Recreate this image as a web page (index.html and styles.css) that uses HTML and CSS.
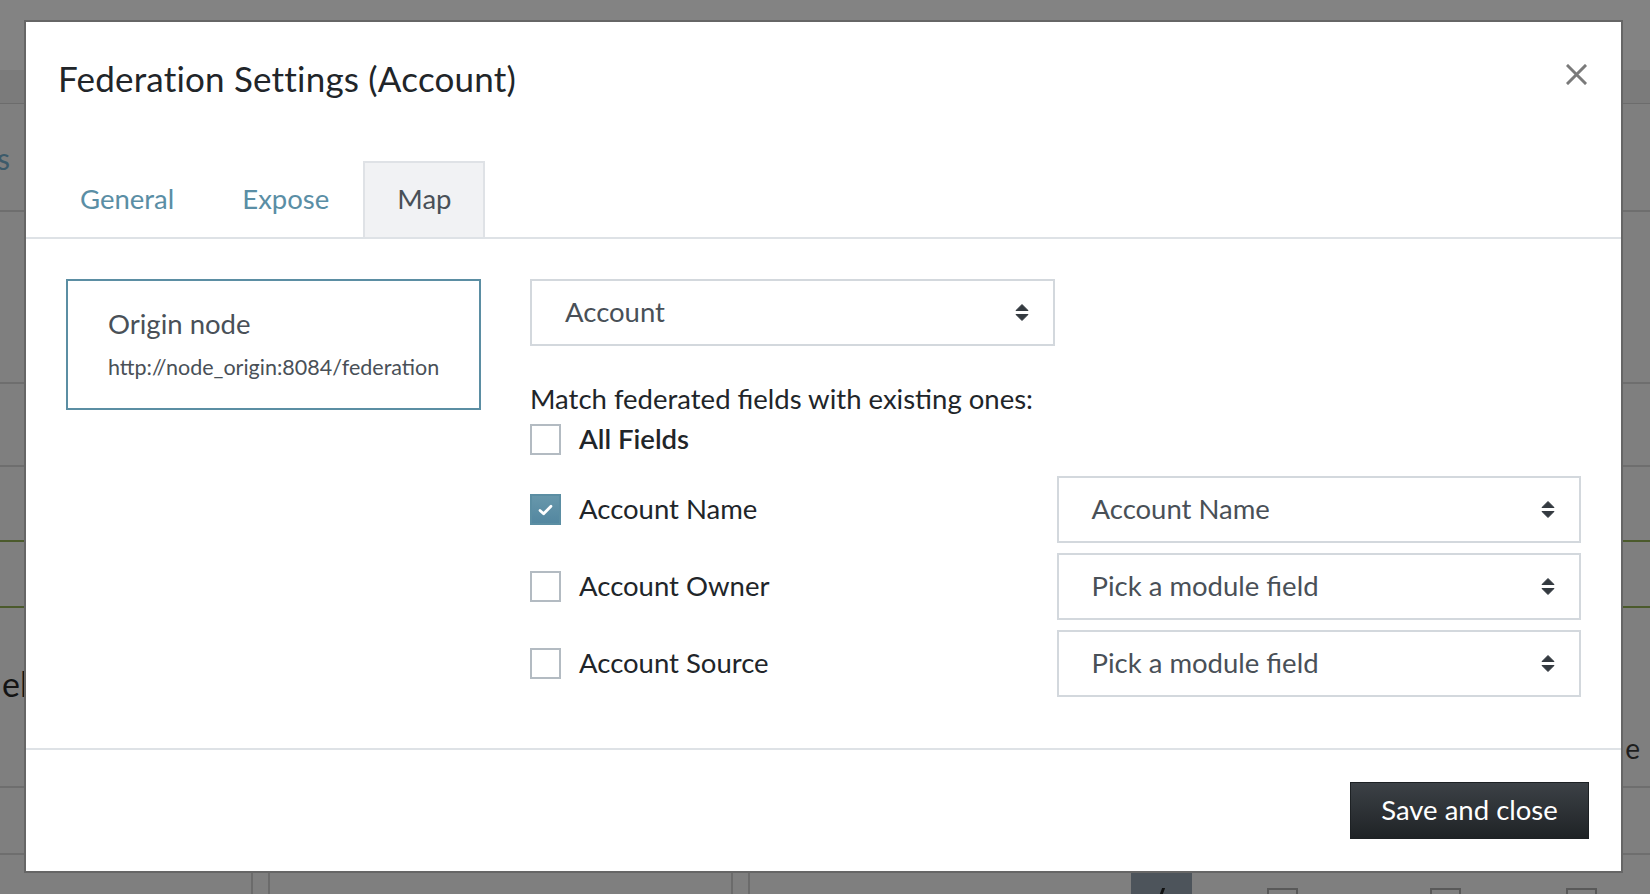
FILE: index.html
```html
<!DOCTYPE html>
<html lang="en">
<head>
<meta charset="utf-8">
<title>Federation Settings (Account)</title>
<link rel="stylesheet" href="styles.css">
</head>
<body>
<div class="page">
  <div class="bg-band bg-top"></div>
  <div class="bg-band bg-head"></div>
  <div class="bg-row h108"><span class="bg-link">s</span></div>
  <div class="bg-row h172"></div>
  <div class="bg-row h83"></div>
  <div class="bg-row h75 green"></div>
  <div class="bg-row h66 green"></div>
  <div class="bg-row h180 bg-split"><span class="bg-strong">el</span><span class="bg-e">e</span></div>
  <div class="bg-row h67"></div>
  <div class="bg-row h16 noline"></div>
  <div class="bg-bottom">
    <div class="cell w253"></div>
    <div class="cell w17"></div>
    <div class="cell w463"></div>
    <div class="cell w17"></div>
    <div class="cell w381"></div>
    <div class="cell dark"><span class="slash"></span></div>
    <div class="cell w75"></div>
    <div class="sq"></div>
    <div class="cell w132"></div>
    <div class="sq"></div>
    <div class="cell w105"></div>
    <div class="sq"></div>
  </div>
</div>

<div class="modal" role="dialog">
  <div class="modal-header">
    <h1 class="modal-title">Federation Settings (Account)</h1>
    <button class="close" aria-label="Close">
      <svg width="21" height="21" viewBox="0 0 21 21"><path d="M2 2 L19 19 M19 2 L2 19" stroke="#7a7a7a" stroke-width="3" stroke-linecap="square" fill="none"/></svg>
    </button>
  </div>

  <nav class="tabs">
    <a class="tab">General</a>
    <a class="tab">Expose</a>
    <a class="tab active">Map</a>
  </nav>

  <div class="modal-body">
    <div class="node-card">
      <div class="node-name">Origin node</div>
      <div class="node-url">http://node_origin:8084/federation</div>
    </div>

    <div class="mapping">
      <div class="grid">
        <div class="select"><span>Account</span><svg class="arrows" width="14" height="19" viewBox="0 0 14 19"><path d="M1 7.5 L7 1.5 L13 7.5 Z M1 11.5 L7 17.5 L13 11.5 Z" fill="#343a40" stroke="#343a40" stroke-width="1" stroke-linejoin="round"/></svg></div>
      </div>

      <div class="match-label">Match federated fields with existing ones:</div>

      <label class="check all">
        <span class="box"></span><span class="check-text">All Fields</span>
      </label>

      <div class="rows">
        <div class="grid row">
          <label class="check"><span class="box checked"><svg width="15" height="12" viewBox="0 0 15 12"><path d="M2 6.5 L5.6 9.8 L13 2.2" stroke="#fff" stroke-width="2.8" fill="none" stroke-linecap="round" stroke-linejoin="round"/></svg></span><span class="check-text">Account Name</span></label>
          <div class="select"><span>Account Name</span><svg class="arrows" width="14" height="19" viewBox="0 0 14 19"><path d="M1 7.5 L7 1.5 L13 7.5 Z M1 11.5 L7 17.5 L13 11.5 Z" fill="#343a40" stroke="#343a40" stroke-width="1" stroke-linejoin="round"/></svg></div>
        </div>
        <div class="grid row">
          <label class="check"><span class="box"></span><span class="check-text">Account Owner</span></label>
          <div class="select"><span>Pick a module field</span><svg class="arrows" width="14" height="19" viewBox="0 0 14 19"><path d="M1 7.5 L7 1.5 L13 7.5 Z M1 11.5 L7 17.5 L13 11.5 Z" fill="#343a40" stroke="#343a40" stroke-width="1" stroke-linejoin="round"/></svg></div>
        </div>
        <div class="grid row">
          <label class="check"><span class="box"></span><span class="check-text">Account Source</span></label>
          <div class="select"><span>Pick a module field</span><svg class="arrows" width="14" height="19" viewBox="0 0 14 19"><path d="M1 7.5 L7 1.5 L13 7.5 Z M1 11.5 L7 17.5 L13 11.5 Z" fill="#343a40" stroke="#343a40" stroke-width="1" stroke-linejoin="round"/></svg></div>
        </div>
      </div>
    </div>
  </div>

  <div class="modal-footer">
    <button class="btn-save">Save and close</button>
  </div>
</div>
</body>
</html>
```

FILE: styles.css
```css
* { box-sizing: border-box; }

html, body {
  margin: 0;
  padding: 0;
  width: 1650px;
  height: 894px;
  overflow: hidden;
}

body {
  background: #7f7f7f;
  font-family: "Lato", "Liberation Sans", sans-serif;
  color: #212529;
}

/* ---------- dimmed page behind the dialog ---------- */
.page {
  display: flex;
  flex-direction: column;
  width: 1650px;
  height: 894px;
}
.bg-band { flex: none; }
.bg-top { height: 70px; background: #838383; }
.bg-head { height: 34px; background: #7b7b7b; border-bottom: 1px solid #6c6c6c; }
.bg-row {
  flex: none;
  position: relative;
  border-bottom: 2px solid #6e6e6e;
}
.bg-row.green { border-bottom-color: #4b5a2c; }
.bg-row.noline { border-bottom: none; }
.h108 { height: 108px; }
.h172 { height: 172px; }
.h83 { height: 83px; }
.h75 { height: 75px; }
.h66 { height: 66px; }
.h180 { height: 180px; }
.h67 { height: 67px; }
.h16 { height: 16px; }
.bg-link {
  display: block;
  padding-top: 34px;
  font-size: 30px;
  color: #3c5a6a;
  line-height: 40px;
  margin-left: -3px;
}
.bg-split {
  display: flex;
  justify-content: space-between;
}
.bg-strong {
  font-size: 34px;
  color: #141414;
  margin-top: 56px;
  line-height: 40px;
  margin-left: 2px;
}
.bg-e {
  font-size: 28px;
  color: #1e1e1e;
  margin-top: 122px;
  line-height: 36px;
  margin-right: 10px;
}
.bg-bottom {
  flex: 1;
  display: flex;
  align-items: stretch;
}
.cell { flex: none; border-right: 2px solid #6b6b6b; }
.w253 { width: 253px; }
.w17 { width: 17px; }
.w463 { width: 463px; }
.w381 { width: 381px; border-right: none; }
.w75 { width: 75px; border-right: none; }
.w132 { width: 132px; border-right: none; }
.w105 { width: 105px; border-right: none; }
.dark {
  width: 61px;
  background: #4d545b;
  border-right: none;
  position: relative;
}
.slash {
  position: absolute;
  left: 30px;
  bottom: 0;
  width: 3px;
  height: 6px;
  background: #111;
  transform: skewX(-20deg);
}
.sq {
  flex: none;
  width: 31px;
  margin-top: 17px;
  border: 2px solid #595959;
  border-bottom: none;
}

/* ---------- dialog ---------- */
.modal {
  position: fixed;
  left: 24px;
  top: 20px;
  width: 1599px;
  height: 853px;
  background: #fff;
  border: 2px solid #666;
  display: flex;
  flex-direction: column;
}

.modal-header {
  display: flex;
  justify-content: space-between;
  align-items: flex-start;
  padding: 36px 34px 0 32px;
}
.modal-title {
  margin: 0;
  font-size: 35px;
  font-weight: 400;
  line-height: 40px;
  color: #212529;
  letter-spacing: 0.2px;
}
.close {
  border: none;
  background: none;
  padding: 0;
  margin-top: 6px;
  width: 21px;
  height: 21px;
  display: block;
}
.close svg { display: block; }

.tabs {
  display: flex;
  margin-top: 63px;
  padding-left: 20px;
  border-bottom: 2px solid #dee2e6;
  height: 78px;
}
.tab {
  display: flex;
  align-items: center;
  height: 76px;
  padding: 0 32px 4px;
  border: 2px solid transparent;
  border-bottom: none;
  font-size: 27.5px;
  color: #5a8ea5;
}
.tab.active {
  background: #f1f2f4;
  border-color: #dfe2e6;
  color: #495057;
}

.modal-body {
  flex: 1;
  display: flex;
  align-items: flex-start;
  gap: 49px;
  padding: 40px 40px;
}

.node-card {
  flex: none;
  width: 415px;
  height: 131px;
  border: 2px solid #5b8ea3;
  padding: 26px 30px 0 40px;
}
.node-name {
  font-size: 27.5px;
  line-height: 34px;
  color: #495057;
}
.node-url {
  margin-top: 11px;
  font-size: 21.5px;
  line-height: 30px;
  color: #495057;
  white-space: nowrap;
}

.mapping {
  flex: 1;
  display: flex;
  flex-direction: column;
}
.grid {
  display: grid;
  grid-template-columns: 1fr 1fr;
  column-gap: 2px;
}
.select {
  height: 67px;
  border: 2px solid #d3d8dd;
  display: flex;
  align-items: center;
  justify-content: space-between;
  padding: 0 24px 2px 33px;
  font-size: 27.5px;
  color: #495057;
}
.arrows { display: block; margin-top: 2px; }

.match-label {
  margin-top: 34px;
  font-size: 27.5px;
  line-height: 37px;
  color: #212529;
}

.check {
  display: flex;
  align-items: center;
  font-size: 27.5px;
  color: #212529;
}
.check.all {
  margin-top: 3px;
  height: 38px;
}
.box {
  flex: none;
  width: 31px;
  height: 31px;
  border: 2px solid #b3bbc2;
  background: #fff;
  display: flex;
  align-items: center;
  justify-content: center;
}
.box.checked {
  background: linear-gradient(#6797ab, #5387a0);
  border-color: #5b8ea3;
}
.box svg { display: block; }
.check-text {
  margin-left: 18px;
  line-height: 37px;
  padding-bottom: 2px;
}
.check.all .check-text { font-weight: 600; }

.rows {
  margin-top: 18px;
  display: flex;
  flex-direction: column;
  gap: 10px;
}
.row { height: 67px; }

.modal-footer {
  flex: none;
  border-top: 2px solid #dee2e6;
  padding: 32px 32px 32px 0;
  display: flex;
  justify-content: flex-end;
}
.btn-save {
  width: 239px;
  height: 57px;
  border: 1px solid #1d2124;
  background: linear-gradient(#3c4146, #1f2326);
  color: #fff;
  font-family: "Lato", "Liberation Sans", sans-serif;
  font-size: 27.5px;
  padding: 0 0 3px;
}
```
